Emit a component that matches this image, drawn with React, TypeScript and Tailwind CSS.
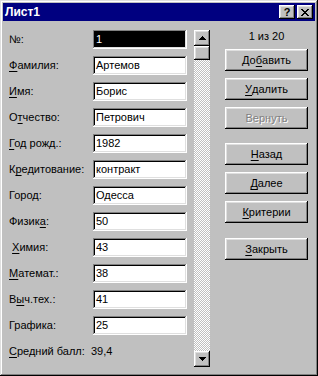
import React from 'react';

type Field = { label: string; u: number; value: string; selected?: boolean };

const FIELDS: Field[] = [
  { label: '№:', u: -1, value: '1', selected: true },
  { label: 'Фамилия:', u: 0, value: 'Артемов' },
  { label: 'Имя:', u: 0, value: 'Борис' },
  { label: 'Отчество:', u: 1, value: 'Петрович' },
  { label: 'Год рожд.:', u: 0, value: '1982' },
  { label: 'Кредитование:', u: 1, value: 'контракт' },
  { label: 'Город:', u: -1, value: 'Одесса' },
  { label: 'Физика:', u: 5, value: '50' },
  { label: '\u00a0Химия:', u: 1, value: '43' },
  { label: 'Математ.:', u: 0, value: '38' },
  { label: 'Выч.тех.:', u: 1, value: '41' },
  { label: 'Графика:', u: -1, value: '25' },
];

const BUTTONS = [
  { label: 'Добавить', u: 2, mt: 'mt-[6px]' },
  { label: 'Удалить', u: 0, mt: 'mt-[7px]' },
  { label: 'Вернуть', u: -1, mt: 'mt-[7px]', disabled: true },
  { label: 'Назад', u: 0, mt: 'mt-[14px]' },
  { label: 'Далее', u: 0, mt: 'mt-[7px]' },
  { label: 'Критерии', u: 0, mt: 'mt-[7px]' },
  { label: 'Закрыть', u: 0, mt: 'mt-[15px]' },
];

const raised =
  'bg-[#c0c0c0] shadow-[inset_-1px_-1px_#000,inset_1px_1px_#fff,inset_-2px_-2px_#808080,inset_2px_2px_#dfdfdf]';
const sunken =
  'shadow-[inset_-1px_-1px_#fff,inset_1px_1px_#808080,inset_-2px_-2px_#dfdfdf,inset_2px_2px_#000]';

function Accel({ text, u }: { text: string; u: number }) {
  if (u < 0) return <>{text}</>;
  return (
    <>
      {text.slice(0, u)}
      <span className="underline underline-offset-[2px]">{text[u]}</span>
      {text.slice(u + 1)}
    </>
  );
}

function Arrow({ down }: { down?: boolean }) {
  const rows = down ? [[0, 7], [1, 5], [2, 3], [3, 1]] : [[3, 1], [2, 3], [1, 5], [0, 7]];
  return (
    <svg width="7" height="4" viewBox="0 0 7 4" shapeRendering="crispEdges">
      {rows.map(([x, w], i) => (
        <rect key={i} x={x} y={i} width={w} height="1" fill="#000" />
      ))}
    </svg>
  );
}

function CloseGlyph() {
  const cells = [
    [0, 0, 2], [6, 0, 2],
    [1, 1, 2], [5, 1, 2],
    [2, 2, 4],
    [3, 3, 2],
    [2, 4, 4],
    [1, 5, 2], [5, 5, 2],
    [0, 6, 2], [6, 6, 2],
  ];
  return (
    <svg width="8" height="7" viewBox="0 0 8 7" shapeRendering="crispEdges">
      {cells.map(([x, y, w], i) => (
        <rect key={i} x={x} y={y} width={w} height="1" fill="#000" />
      ))}
    </svg>
  );
}

export default function App() {
  return (
    <div className="w-[318px] h-[376px] bg-[#c0c0c0] p-[3px] flex flex-col font-['Liberation_Sans',Arial,sans-serif] text-[11px] text-black shadow-[inset_-1px_-1px_#000,inset_1px_1px_#dfdfdf,inset_-2px_-2px_#808080,inset_2px_2px_#fff]">
      {/* title bar */}
      <div className="h-[18px] bg-[#000080] flex items-center pl-[2px] pr-[2px]">
        <span className="text-white font-bold text-[12px] leading-none">Лист1</span>
        <div className="ml-auto flex gap-[2px]">
          <div className={`w-[16px] h-[14px] flex items-center justify-center ${raised}`}>
            <span className="font-bold text-[11px] leading-none mt-[1px]">?</span>
          </div>
          <div className={`w-[16px] h-[14px] flex items-center justify-center ${raised}`}>
            <CloseGlyph />
          </div>
        </div>
      </div>

      <div className="flex-1 flex">
        {/* fields */}
        <div className="pl-[6px] pt-[9px] flex flex-col gap-[7px]">
          {FIELDS.map((f) => (
            <div key={f.label} className="h-[19px] flex items-center">
              <div className="w-[84px] whitespace-pre">
                <Accel text={f.label} u={f.u} />
              </div>
              <div className={`w-[94px] h-[19px] p-[2px] bg-white ${sunken}`}>
                <div className={`h-full flex items-center px-[1px] ${f.selected ? 'bg-black text-white' : ''}`}>
                  {f.value}
                </div>
              </div>
            </div>
          ))}
          <div className="h-[19px] flex items-center">
            <div className="w-[82px]">
              <Accel text="Средний балл:" u={0} />
            </div>
            <div>39,4</div>
          </div>
        </div>

        {/* scrollbar */}
        <div className="ml-[7px] mt-[9px] w-[16px] h-[337px] flex flex-col">
          <div className={`h-[16px] flex items-center justify-center ${raised}`}>
            <Arrow />
          </div>
          <div className={`h-[14px] ${raised}`} />
          <div className="flex-1 bg-[repeating-conic-gradient(#c0c0c0_0%_25%,#fff_0%_50%)] bg-[length:2px_2px] bg-size-[2px_2px]" />
          <div className={`h-[16px] flex items-center justify-center ${raised}`}>
            <Arrow down />
          </div>
        </div>

        {/* buttons */}
        <div className="ml-[15px] w-[83px] pt-[9px] flex flex-col">
          <div className="h-[13px] leading-[13px] text-center">1 из 20</div>
          {BUTTONS.map((b) => (
            <div
              key={b.label}
              className={`${b.mt} h-[22px] flex items-center justify-center ${raised} ${
                b.disabled ? 'text-[#808080] [text-shadow:1px_1px_0_#fff]' : ''
              }`}
            >
              <Accel text={b.label} u={b.u} />
            </div>
          ))}
        </div>
      </div>
    </div>
  );
}
